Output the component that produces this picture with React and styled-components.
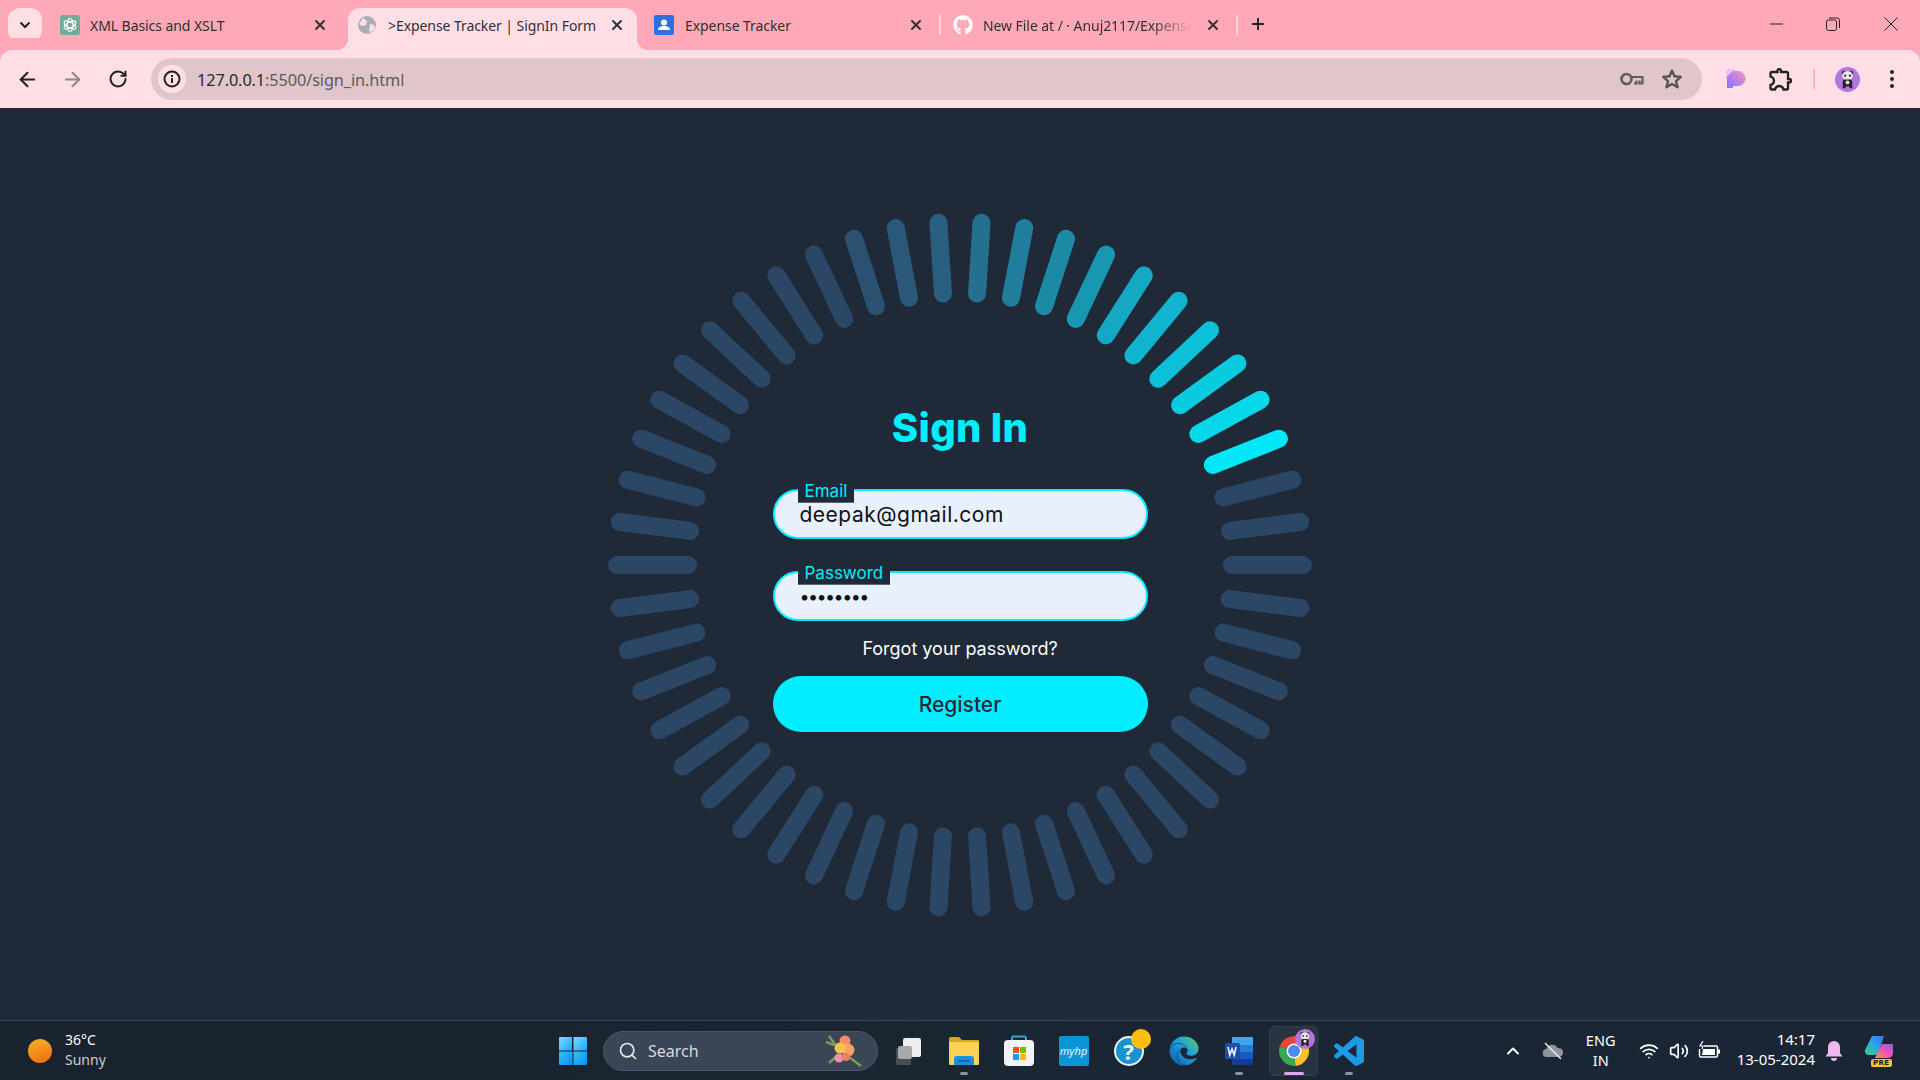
import React from 'react';
import styled, { createGlobalStyle } from 'styled-components';
import { ArrowLeft, ArrowRight, RotateCw, X, Plus, Search as SearchGlyph, ChevronUp, Wifi, Volume2 } from 'lucide-react';
import { FaGithub, FaEdge } from 'react-icons/fa';
import { MdOutlineExtension } from 'react-icons/md';

const UI = '"Noto Sans", "Open Sans", sans-serif';
const FORM = 'Inter, "Open Sans", sans-serif';

const Global = createGlobalStyle`
  html, body { margin: 0; padding: 0; height: 100%; overflow: hidden; background: #1f2937; }
  #root { height: 100%; }
  * { box-sizing: border-box; }
`;

const Screen = styled.div`display: flex; flex-direction: column; width: 1920px; height: 1080px; font-family: ${UI};`;

/* ---- browser chrome ---- */
const TabStrip = styled.div`display: flex; align-items: flex-end; height: 50px; padding-left: 8px; background: #ffa9b8; flex: none;`;
const DropButton = styled.div`
  display: flex; align-items: center; justify-content: center; width: 34px; height: 34px;
  margin: 0 6px 8px 0; border-radius: 12px; background: #ffdfe5; color: #1f1f1f;
`;
const Tab = styled.div`
  position: relative; display: flex; align-items: center; flex: none; height: 42px;
  width: ${p => p.$w}px; padding: 0 ${p => p.$pr}px 8px ${p => p.$pl}px;
  border-radius: 12px 12px 0 0; color: #303030;
  ${p => p.$active && `
    background: #ffdfe5; padding-bottom: 8px;
    &::before, &::after { content: ''; position: absolute; bottom: 0; width: 12px; height: 12px; }
    &::before { left: -12px; background: radial-gradient(circle at 0 0, transparent 12px, #ffdfe5 12.5px); }
    &::after { right: -12px; background: radial-gradient(circle at 100% 0, transparent 12px, #ffdfe5 12.5px); }
  `}
  ${p => p.$sep && `
    &::after { content: ''; position: absolute; right: -1px; top: 7px; width: 2px; height: 20px; background: #ffd3db; }
  `}
`;
const TabTitle = styled.span`
  flex: 1; margin-left: ${p => p.$gap}px; font-size: 14px; letter-spacing: -0.07px; white-space: nowrap; overflow: hidden; min-width: 0;
  ${p => p.$fade && `-webkit-mask-image: linear-gradient(90deg, #000 76%, transparent 94%); mask-image: linear-gradient(90deg, #000 76%, transparent 94%);`}
`;
const NewTab = styled.div`display: flex; align-items: center; margin: 0 0 17px 12px; color: #222;`;
const WindowControls = styled.div`display: flex; margin-left: auto; align-self: flex-start; height: 48px;`;
const WindowButton = styled.div`display: flex; align-items: center; justify-content: center; width: ${p => p.$w || 56}px; height: 48px; color: #222;`;

const Toolbar = styled.div`
  display: flex; align-items: center; flex: none; height: 59px; padding: 0 5px; background: #ffdfe5;
  border-radius: 12px 12px 0 0; box-shadow: 0 -12px 0 0 #ffa9b8; border-bottom: 1px solid #2a2a33;
`;
const NavSlot = styled.div`display: flex; align-items: center; justify-content: center; flex: none; width: ${p => p.$w || 45}px; height: 40px; color: ${p => p.$c || '#222'};`;
const Omnibox = styled.div`
  display: flex; align-items: center; width: 1551px; height: 42px; margin-left: 11px; padding: 0 18px 0 7px;
  border-radius: 21px; background: #e0c5ca; flex: none;
`;
const InfoBadge = styled.div`display: flex; align-items: center; justify-content: center; width: 28px; height: 28px; border-radius: 50%; background: #ffdfe5;`;
const Url = styled.div`margin-left: 11px; padding-top: 1px; font-size: 16.3px; color: #5f5a5c; flex: 1; letter-spacing: -0.1px;`;
const UrlHost = styled.span`color: #2a2a2a;`;
const OmniIcons = styled.div`display: flex; align-items: center; gap: 16px;`;
const ToolGroup = styled.div`display: flex; align-items: center; margin-left: 11px;`;
const ToolSep = styled.div`width: 2px; height: 20px; margin: 0 10px; background: #ffb3c1;`;

/* ---- page ---- */
const Page = styled.main`flex: 1; min-height: 0; display: flex; align-items: center; justify-content: center; background: #1f2937;`;
const Stage = styled.div`display: grid; place-items: center;`;
const Ring = styled.svg`grid-area: 1 / 1; display: block;`;
const Form = styled.form`grid-area: 1 / 1; z-index: 1; display: flex; flex-direction: column; width: 375px; font-family: ${FORM};`;
const Title = styled.h2`
  margin: 0 0 31px; height: 60px; line-height: 60px; text-align: center; font-size: 40px; font-weight: 800;
  color: #00eeff; letter-spacing: 0.3px;
`;
const Field = styled.div`position: relative; height: 50px; margin-bottom: ${p => p.$mb || 0}px;`;
const FieldInput = styled.input`
  display: block; width: 100%; height: 100%; padding: 1px 25px 0; border: 2px solid #00eeff; border-radius: 25px; outline: none;
  background: #e8f0fe; color: #111; font-family: ${FORM}; font-size: ${p => p.$fs || 21}px; letter-spacing: ${p => p.$ls || 0}px;
`;
const FieldLabel = styled.label`
  position: absolute; left: 25px; top: -4px; height: 18px; padding: 0 7px; background: #1f2937; border-bottom: 1px solid #5b6675;
  color: #00eeff; font-size: 17px; line-height: 12px; white-space: nowrap;
`;
const Forgot = styled.a`display: flex; align-items: center; justify-content: center; height: 55px; padding-top: 1px; color: #fff; font-size: 18px;`;
const Submit = styled.button`
  height: 56px; padding: 2px 0 0; border: 0; border-radius: 28px; background: #00eeff; color: #1f2937;
  font-family: ${FORM}; font-size: 21px; font-weight: 500;
`;

/* ---- taskbar ---- */
const Taskbar = styled.footer`
  display: grid; grid-template-columns: 558px auto 1fr; align-items: center; flex: none; height: 60px;
  background: linear-gradient(90deg, #19232d, #1b2634 60%, #1a2635); border-top: 1px solid #3b4550; color: #fff;
`;
const Weather = styled.div`display: flex; align-items: center; padding-left: 28px; gap: 13px;`;
const Sun = styled.div`width: 24px; height: 24px; border-radius: 50%; background: linear-gradient(160deg, #f5b32a, #ef6a0e);`;
const WeatherText = styled.div`display: flex; flex-direction: column; font-size: 14px; line-height: 20px; padding-bottom: 2px;`;
const Muted = styled.span`color: #c9ced4;`;
const Center = styled.div`display: flex; align-items: center;`;
const SearchBox = styled.div`
  display: flex; align-items: center; justify-content: space-between; width: 275px; height: 40px; margin: 0 3px 0 15px; padding: 0 14px 0 14px;
  border-radius: 20px; background: #3a4555; border: 1px solid #4a5565; font-size: 16px; color: #d6dade;
`;
const SearchLeft = styled.div`display: flex; align-items: center; gap: 10px;`;
const AppSlot = styled.div`
  position: relative; display: flex; align-items: center; justify-content: center; flex: none; width: 55px; height: 50px;
  ${p => p.$active && `
    &::before { content: ''; position: absolute; inset: 0 3px; border-radius: 5px; background: #2a3441; border: 1px solid #343e4b; }
    & > * { position: relative; }
  `}
`;
const Indicator = styled.span`
  position: absolute !important; bottom: 1px; left: 50%; transform: translateX(-50%); height: 3px; border-radius: 2px;
  width: ${p => p.$w || 8}px; background: ${p => p.$c || '#8c939b'};
`;
const HelpDisc = styled.div`
  position: relative; display: flex; align-items: center; justify-content: center; width: 30px; height: 30px; border-radius: 50%;
  background: #1594cf; border: 2px solid #eef4f8; color: #fff; font-size: 22px; font-weight: 700; font-family: ${UI};
`;
const HelpDot = styled.span`position: absolute; top: -9px; right: -9px; width: 20px; height: 20px; border-radius: 50%; background: #fdbf0e;`;
const HpTile = styled.div`
  display: flex; align-items: center; justify-content: center; width: 30px; height: 30px; background: #0a96d4; border-radius: 2px;
  color: #e8f6fc; font-family: ${UI}; font-size: 11px; font-style: italic;
`;
const AvatarBadge = styled.span`position: absolute !important; top: -6px; right: -5px; display: flex;`;
const ChromeWrap = styled.div`position: relative; display: flex;`;
const Tray = styled.div`display: flex; align-items: center; justify-content: flex-end; padding-right: 24px; font-size: 14px;`;
const TrayIcon = styled.div`display: flex; align-items: center; justify-content: center; width: ${p => p.$w || 30}px; margin-left: ${p => p.$ml || 0}px;`;
const Lang = styled.div`width: 50px; margin-left: 8px; text-align: center; font-size: 14.5px; line-height: 20px; padding-bottom: 2px;`;
const Clock = styled.div`display: flex; flex-direction: column; align-items: flex-end; margin-left: 13px; font-size: 15px; line-height: 20px; padding-bottom: 4px;`;
const BadgeWrap = styled.div`position: relative; display: flex; width: 32px; height: 32px; margin-left: 15px;`;
const PreBadge = styled.span`
  position: absolute; left: 7px; bottom: 0; padding: 0 2px; border-radius: 2px; background: #f6c22c; color: #1b1b1b;
  font-family: "DejaVu Sans", sans-serif; font-size: 7px; font-weight: 700; line-height: 8px; letter-spacing: .4px;
`;
const EdgeIcon = styled(FaEdge)`fill: url(#edgeGrad);`;
const Defs = styled.svg`width: 0; height: 0; display: block;`;

/* ---- drawings ---- */
const RING_COLORS = ['#02e6f8', '#06d8ea', '#09cbdf', '#0cc0d8', '#10b4cc', '#14a8c2', '#1897b0', '#1d8aa5', '#217d9c', '#26708f', '#285f80', '#2a5878', '#2b5070'];
const RING_BASE = '#2c4766';
const bars = Array.from({ length: 50 }, (_, i) => {
  const angle = i * 7.2;
  const n = Math.round((((angle - 21.6) % 360 + 360) % 360) / 7.2);
  return { angle, color: RING_COLORS[n] || RING_BASE };
});
const RingChart = () => (
  <Ring width="720" height="720" viewBox="-360 -360 720 720">
    {bars.map(b => {
      const r = (b.angle * Math.PI) / 180;
      return <line key={b.angle} x1={272 * Math.cos(r)} y1={-272 * Math.sin(r)} x2={343 * Math.cos(r)} y2={-343 * Math.sin(r)} stroke={b.color} strokeWidth="18" strokeLinecap="round" />;
    })}
  </Ring>
);

const OpenAIFav = () => (
  <svg width="20" height="20" viewBox="0 0 20 20">
    <rect width="20" height="20" rx="3" fill="#74aa9c" />
    <g fill="none" stroke="#fff" strokeWidth="1.2">
      <ellipse cx="10" cy="10" rx="3" ry="6.5" />
      <ellipse cx="10" cy="10" rx="3" ry="6.5" transform="rotate(60 10 10)" />
      <ellipse cx="10" cy="10" rx="3" ry="6.5" transform="rotate(120 10 10)" />
    </g>
  </svg>
);
const GlobeFav = () => (
  <svg width="20" height="20" viewBox="0 0 20 20">
    <circle cx="10" cy="10" r="9" fill="#a9aeb5" />
    <path d="M6 3l4 3-1 4-4 1-3-2zM13 9l4 1 1 3-4 5-2-3z" fill="#ffdfe5" />
  </svg>
);
const ContactsFav = () => (
  <svg width="20" height="20" viewBox="0 0 20 20">
    <rect width="20" height="20" rx="2" fill="#2f6fe0" />
    <circle cx="10" cy="7.5" r="3" fill="#fff" />
    <path d="M4 15c0-3 3-4 6-4s6 1 6 4z" fill="#fff" />
  </svg>
);
const Minimize = () => <svg width="14" height="14" viewBox="0 0 14 14"><path d="M0 7h13" stroke="#222" strokeWidth="1" /></svg>;
const Restore = () => (
  <svg width="14" height="14" viewBox="0 0 14 14" fill="none" stroke="#222" strokeWidth="1">
    <rect x="0.5" y="3" width="10" height="10.5" rx="2" />
    <path d="M3 1h8a2.5 2.5 0 0 1 2.5 2.5V11" />
  </svg>
);
const Cross = () => <svg width="14" height="14" viewBox="0 0 14 14"><path d="M.5.5l13 13M13.5.5l-13 13" stroke="#222" strokeWidth="1" /></svg>;
const InfoIcon = () => (
  <svg width="18" height="18" viewBox="0 0 18 18">
    <circle cx="9" cy="9" r="7.5" fill="none" stroke="#222" strokeWidth="2" />
    <rect x="8" y="8" width="2" height="5" fill="#222" />
    <rect x="8" y="5" width="2" height="2" fill="#222" />
  </svg>
);
const KeyIcon = () => (
  <svg width="24" height="14" viewBox="0 0 24 14" fill="none" stroke="#5e5e5e" strokeWidth="2.6">
    <circle cx="6.5" cy="7" r="5" />
    <path d="M11.5 5h11v6.500h-3V8.500M16.500 8.500v3h-2.500" strokeWidth="2.2" />
  </svg>
);
const StarIcon = () => (
  <svg width="24" height="24" viewBox="0 0 24 24" fill="none" stroke="#555" strokeWidth="2.4" strokeLinejoin="round">
    <path d="M12 3.500l2.500 5.800 6.300.6-4.800 4.200 1.500 6.200L12 17l-5.500 3.300L8 14.100 3.200 9.900l6.300-.6z" />
  </svg>
);
const PaletteIcon = () => (
  <svg width="20" height="20" viewBox="0 0 20 20">
    <defs>
      <linearGradient id="pal" x1="0" y1="1" x2="1" y2="0"><stop offset="0" stopColor="#7b72ff" /><stop offset="1" stopColor="#ff8fc8" /></linearGradient>
    </defs>
    <path d="M1 19V8l5-6h6a7.500 7.500 0 0 1 0 15H7v2z" fill="url(#pal)" />
    <path d="M0 7l7-7h2L0 9zM0 3l3-3h2L0 5z" fill="#d9a5ff" />
  </svg>
);
const Panda = ({ size }) => (
  <svg width={size} height={size} viewBox="0 0 26 26">
    <circle cx="13" cy="13" r="13" fill="#b474de" />
    <circle cx="9" cy="6" r="2" fill="#333" /><circle cx="17" cy="6" r="2" fill="#333" />
    <ellipse cx="13" cy="9" rx="5.500" ry="4.500" fill="#e9e9e9" />
    <circle cx="10.500" cy="9" r="1.200" fill="#333" /><circle cx="15.500" cy="9" r="1.200" fill="#333" />
    <rect x="8" y="13" width="10" height="7" rx="3" fill="#222" />
    <rect x="11" y="14" width="4" height="4" rx="2" fill="#eee" />
    <rect x="8" y="19" width="3" height="3" fill="#222" /><rect x="15" y="19" width="3" height="3" fill="#222" />
  </svg>
);
const MenuDots = () => (
  <svg width="6" height="20" viewBox="0 0 6 20" fill="#222"><circle cx="3" cy="3" r="2" /><circle cx="3" cy="10" r="2" /><circle cx="3" cy="17" r="2" /></svg>
);
const StartLogo = () => (
  <svg width="30" height="30" viewBox="0 0 30 30">
    <defs>
      <linearGradient id="st1" x1="0" y1="0" x2="1" y2="1"><stop offset="0" stopColor="#7fdcff" /><stop offset="1" stopColor="#1aa6f5" /></linearGradient>
      <linearGradient id="st2" x1="0" y1="0" x2="1" y2="1"><stop offset="0" stopColor="#36c0f8" /><stop offset="1" stopColor="#0b8ff5" /></linearGradient>
    </defs>
    <path d="M1 2a1 1 0 0 1 1-1h12v13.500H1z" fill="url(#st1)" />
    <path d="M15.500 1H28a1 1 0 0 1 1 1v12.500H15.500z" fill="url(#st1)" />
    <path d="M1 15.500h13.500V29H2a1 1 0 0 1-1-1z" fill="url(#st2)" />
    <path d="M15.500 15.500H29V28a1 1 0 0 1-1 1H15.500z" fill="url(#st2)" />
  </svg>
);
const Flower = () => (
  <svg width="42" height="36" viewBox="0 0 42 36">
    <path d="M8 3l8 11M8 30l9-8M28 24l12 9M5 9l8 3" stroke="#7d9a5a" strokeWidth="2.500" />
    <circle cx="24" cy="8" r="5.500" fill="#f28e6b" /><circle cx="27" cy="17" r="6.500" fill="#f9a267" />
    <circle cx="19" cy="15" r="5.500" fill="#f6c24f" /><circle cx="18" cy="25" r="4.500" fill="#f190b0" />
    <circle cx="25" cy="24" r="4" fill="#ee7f5f" />
  </svg>
);
const TaskView = () => (
  <svg width="26" height="30" viewBox="0 0 26 30">
    <rect x="0" y="12" width="15" height="17" rx="2" fill="#4a4f55" />
    <rect x="7" y="2" width="18" height="19" rx="2" fill="#eeeeee" />
    <rect x="2" y="10" width="14" height="13" rx="2" fill="#a8a8a8" />
  </svg>
);
const Explorer = () => (
  <svg width="32" height="30" viewBox="0 0 32 30">
    <path d="M1 3a2 2 0 0 1 2-2h8l3 3h16a1 1 0 0 1 1 1v3H1z" fill="#d9a520" />
    <path d="M1 6h30v22a1 1 0 0 1-1 1H2a1 1 0 0 1-1-1z" fill="#fbd255" />
    <path d="M6 29V23a3 3 0 0 1 3-3h14a3 3 0 0 1 3 3v6z" fill="#1b8fe0" />
    <path d="M10 25h12" stroke="#0c5fa8" strokeWidth="1.500" />
  </svg>
);
const Store = () => (
  <svg width="30" height="32" viewBox="0 0 30 32">
    <path d="M8 8V3a1.500 1.500 0 0 1 1.500-1.500h11A1.500 1.500 0 0 1 22 3v5" fill="none" stroke="#2aa6e0" strokeWidth="2" />
    <rect y="5" width="30" height="26" rx="4" fill="#f3f3f3" />
    <rect x="9" y="12" width="6" height="6" fill="#f25022" /><rect x="16" y="12" width="6" height="6" fill="#7fba00" />
    <rect x="9" y="19" width="6" height="6" fill="#00a4ef" /><rect x="16" y="19" width="6" height="6" fill="#ffb900" />
  </svg>
);
const Word = () => (
  <svg width="30" height="30" viewBox="0 0 30 30">
    <path d="M8 1h20a1 1 0 0 1 1 1v7H8z" fill="#41a5ee" /><path d="M8 9h21v7H8z" fill="#2b7cd3" />
    <path d="M8 16h21v7H8z" fill="#185abd" /><path d="M8 23h21v5a1 1 0 0 1-1 1H9a1 1 0 0 1-1-1z" fill="#103f91" />
    <rect x="1" y="7" width="15" height="16" rx="1.500" fill="#1d4fa8" />
    <path d="M4 11l1.800 8 2.200-6 2.200 6 1.800-8" fill="none" stroke="#fff" strokeWidth="1.500" />
  </svg>
);
const Chrome = () => (
  <svg width="32" height="32" viewBox="0 0 32 32">
    <g fill="none" strokeWidth="10">
      <path d="M6.500 13a10 10 0 0 1 18.400-1.500" stroke="#e8453c" />
      <path d="M24.900 11.500a10 10 0 0 1-8 14.400" stroke="#fbc02d" />
      <path d="M16.900 25.900A10 10 0 0 1 6.500 13" stroke="#34a853" />
    </g>
    <circle cx="16" cy="16" r="7.500" fill="#fff" /><circle cx="16" cy="16" r="6" fill="#4a8af4" />
  </svg>
);
const VSCode = () => (
  <svg width="30" height="30" viewBox="0 0 24 24">
    <path fill="#1e9be8" d="M23.15 2.587L18.21.21a1.494 1.494 0 0 0-1.705.29l-9.46 8.63-4.12-3.128a.999.999 0 0 0-1.276.057L.327 7.261A1 1 0 0 0 .326 8.74L3.899 12 .326 15.26a1 1 0 0 0 .001 1.479L1.650 17.940a.999.999 0 0 0 1.276.057l4.120-3.128 9.460 8.630a1.492 1.492 0 0 0 1.704.290l4.942-2.377A1.500 1.500 0 0 0 24 20.060V3.939a1.500 1.500 0 0 0-.850-1.352zm-5.146 14.861L10.826 12l7.178-5.448v10.896z" />
  </svg>
);
const CloudOff = () => (
  <svg width="22" height="18" viewBox="0 0 22 18">
    <path d="M5 15a4 4 0 0 1-.5-8 6 6 0 0 1 11-1 4.500 4.500 0 0 1 2 9z" fill="#8f959c" />
    <path d="M3 1l16 16" stroke="#eee" strokeWidth="1.500" />
  </svg>
);
const Battery = () => (
  <svg width="22" height="20" viewBox="0 0 22 20" fill="none" stroke="#fff" strokeWidth="1.500">
    <path d="M6 5h12a1.500 1.500 0 0 1 1.500 1.500v8A1.500 1.500 0 0 1 18 16H3a1.500 1.500 0 0 1-1.500-1.500V8" />
    <path d="M4 14l1-6h12v6z" fill="#fff" stroke="none" />
    <path d="M21 8.500v4" strokeWidth="2" />
    <path d="M5 0L2 5h3l-1 3" strokeWidth="1.200" />
  </svg>
);
const Bell = () => (
  <svg width="18" height="22" viewBox="0 0 18 22" fill="#efb7ef">
    <path d="M9 1a6 6 0 0 1 6 6v6l2.500 3.500H.5L3 13V7a6 6 0 0 1 6-6z" /><path d="M6 18h6a3 3 0 0 1-6 0z" />
  </svg>
);
const CopilotMark = () => (
  <svg width="30" height="24" viewBox="0 0 30 24">
    <defs>
      <linearGradient id="cp1" x1="0" y1="1" x2="1" y2="0"><stop offset="0" stopColor="#3fd07a" /><stop offset=".5" stopColor="#2ba8e8" /><stop offset="1" stopColor="#3a6ff0" /></linearGradient>
      <linearGradient id="cp2" x1="0" y1="1" x2="1" y2="0"><stop offset="0" stopColor="#ff9a3c" /><stop offset=".5" stopColor="#f452b0" /><stop offset="1" stopColor="#8d5cf0" /></linearGradient>
    </defs>
    <path d="M8 1h12l-5 16a4 4 0 0 1-4 3H5a4 4 0 0 1-4-5z" fill="url(#cp1)" />
    <path d="M18 9h10a1 1 0 0 1 1 1v8a5 5 0 0 1-5 5H11z" fill="url(#cp2)" />
  </svg>
);

export default function App() {
  return (
    <>
      <Global />
      <Defs>
        <defs>
          <linearGradient id="edgeGrad" x1="0" y1="1" x2="1" y2="0">
            <stop offset="0" stopColor="#0c59a4" /><stop offset=".55" stopColor="#1b9de2" /><stop offset="1" stopColor="#5fd35a" />
          </linearGradient>
        </defs>
      </Defs>
      <Screen>
        <TabStrip>
          <DropButton>
            <svg width="12" height="8" viewBox="0 0 12 8"><path d="M1.500 1.500L6 6l4.500-4.500" fill="none" stroke="#222" strokeWidth="2" /></svg>
          </DropButton>
          <Tab $w={300} $pl={12} $pr={20}>
            <OpenAIFav /><TabTitle $gap={10}>XML Basics and XSLT</TabTitle><X size={16} strokeWidth={3} color="#333" />
          </Tab>
          <Tab $w={289} $pl={9} $pr={12} $active>
            <GlobeFav /><TabTitle $gap={11}>&gt;Expense Tracker | SignIn Form</TabTitle><X size={16} strokeWidth={3} color="#333" />
          </Tab>
          <Tab $w={303} $pl={17} $pr={16} $sep>
            <ContactsFav /><TabTitle $gap={11}>Expense Tracker</TabTitle><X size={16} strokeWidth={3} color="#333" />
          </Tab>
          <Tab $w={297} $pl={13} $pr={16} $sep>
            <FaGithub size={20} color="#fff" /><TabTitle $gap={10} $fade>New File at / · Anuj2117/Expense</TabTitle><X size={16} strokeWidth={3} color="#333" />
          </Tab>
          <NewTab><Plus size={18} strokeWidth={2.6} /></NewTab>
          <WindowControls>
            <WindowButton><Minimize /></WindowButton>
            <WindowButton><Restore /></WindowButton>
            <WindowButton $w={59}><Cross /></WindowButton>
          </WindowControls>
        </TabStrip>

        <Toolbar>
          <NavSlot><ArrowLeft size={23} strokeWidth={2.2} /></NavSlot>
          <NavSlot $c="#8f8487"><ArrowRight size={23} strokeWidth={2} /></NavSlot>
          <NavSlot><RotateCw size={20} strokeWidth={2.4} /></NavSlot>
          <Omnibox>
            <InfoBadge><InfoIcon /></InfoBadge>
            <Url><UrlHost>127.0.0.1</UrlHost>:5500/sign_in.html</Url>
            <OmniIcons><KeyIcon /><StarIcon /></OmniIcons>
          </Omnibox>
          <ToolGroup>
            <NavSlot $w={46}><PaletteIcon /></NavSlot>
            <NavSlot $w={44}><MdOutlineExtension size={28} /></NavSlot>
            <ToolSep />
            <NavSlot $w={44}><Panda size={25} /></NavSlot>
            <NavSlot $w={46}><MenuDots /></NavSlot>
          </ToolGroup>
        </Toolbar>

        <Page>
          <Stage>
            <RingChart />
            <Form>
              <Title>Sign In</Title>
              <Field $mb={32}>
                <FieldInput id="email" type="text" readOnly value="deepak@gmail.com" $ls={0.5} />
                <FieldLabel htmlFor="email">Email</FieldLabel>
              </Field>
              <Field>
                <FieldInput id="pw" type="password" readOnly value="password" $fs={18} $ls={-1.6} />
                <FieldLabel htmlFor="pw">Password</FieldLabel>
              </Field>
              <Forgot>Forgot your password?</Forgot>
              <Submit type="button">Register</Submit>
            </Form>
          </Stage>
        </Page>

        <Taskbar>
          <Weather>
            <Sun />
            <WeatherText><span>36°C</span><Muted>Sunny</Muted></WeatherText>
          </Weather>
          <Center>
            <StartLogo />
            <SearchBox>
              <SearchLeft><SearchGlyph size={20} color="#e6e6e6" strokeWidth={2} />Search</SearchLeft>
              <Flower />
            </SearchBox>
            <AppSlot><TaskView /></AppSlot>
            <AppSlot><Explorer /><Indicator /></AppSlot>
            <AppSlot><Store /></AppSlot>
            <AppSlot><HpTile>myhp</HpTile></AppSlot>
            <AppSlot><HelpDisc>?<HelpDot /></HelpDisc></AppSlot>
            <AppSlot><EdgeIcon size={30} /></AppSlot>
            <AppSlot><Word /><Indicator /></AppSlot>
            <AppSlot $active>
              <ChromeWrap><Chrome /><AvatarBadge><Panda size={20} /></AvatarBadge></ChromeWrap>
              <Indicator $w={20} $c="#e3a4ec" />
            </AppSlot>
            <AppSlot><VSCode /><Indicator /></AppSlot>
          </Center>
          <Tray>
            <TrayIcon><ChevronUp size={20} strokeWidth={2.2} /></TrayIcon>
            <TrayIcon $ml={10}><CloudOff /></TrayIcon>
            <Lang>ENG<br />IN</Lang>
            <TrayIcon $ml={8}><Wifi size={20} /></TrayIcon>
            <TrayIcon><Volume2 size={20} /></TrayIcon>
            <TrayIcon><Battery /></TrayIcon>
            <Clock><span>14:17</span><span>13-05-2024</span></Clock>
            <TrayIcon $ml={4}><Bell /></TrayIcon>
            <BadgeWrap><CopilotMark /><PreBadge>PRE</PreBadge></BadgeWrap>
          </Tray>
        </Taskbar>
      </Screen>
    </>
  );
}
